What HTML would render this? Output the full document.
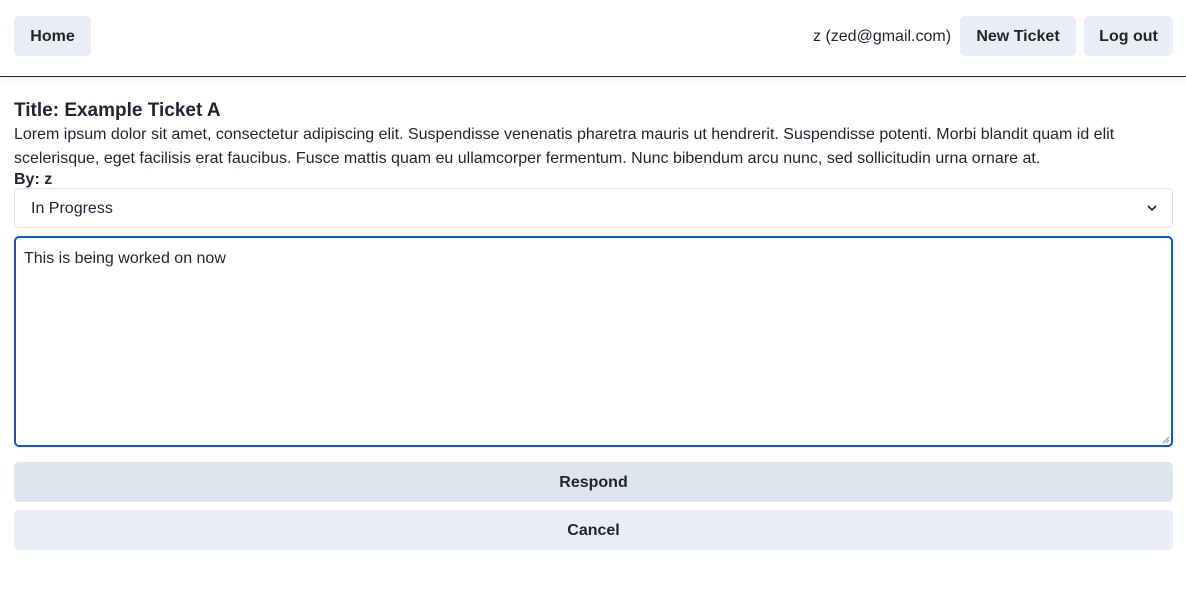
<!DOCTYPE html>
<html><head><meta charset="utf-8"><style>
*{box-sizing:border-box;margin:0;padding:0}
body{width:1186px;height:593px;background:#fff;font-family:"Liberation Sans",Arial,sans-serif;color:#1f2430;position:relative;overflow:hidden}
.hdr{position:absolute;left:0;top:0;width:1186px;height:77px;border-bottom:1px solid #1f2430;box-shadow:0 2px 6px rgba(0,0,0,0.08)}
.btn{position:absolute;top:16px;height:40px;background:#e9eef6;border-radius:5px;font-weight:bold;font-size:16px;display:flex;align-items:center;justify-content:center;padding-top:2px}
.user{position:absolute;top:28px;left:813px;font-size:16px}
.title{position:absolute;left:14px;top:100px;font-size:19px;font-weight:bold}
.p{position:absolute;left:14px;top:123px;width:1160px;font-size:16px;line-height:24px}
.by{position:absolute;left:14px;top:171px;font-size:16px;font-weight:bold}
.sel{position:absolute;left:14px;top:188px;width:1159px;height:40px;border:1px solid #dde3ec;border-radius:5px;font-size:16px;padding:11px 16px}
.ta{position:absolute;left:14px;top:236px;width:1159px;height:211px;border:2px solid #0b57c4;border-radius:5px;font-size:16px;padding:12px 8px}
.wide{position:absolute;left:14px;width:1159px;height:40px;border-radius:5px;font-weight:bold;font-size:16px;display:flex;align-items:center;justify-content:center;padding-top:2px}
</style></head><body>
<div class="hdr"></div>
<div class="btn" style="left:14px;width:77px">Home</div>
<div class="user">z (zed@gmail.com)</div>
<div class="btn" style="left:960px;width:116px">New Ticket</div>
<div class="btn" style="left:1084px;width:89px">Log out</div>
<div class="title">Title: Example Ticket A</div>
<div class="p">Lorem ipsum dolor sit amet, consectetur adipiscing elit. Suspendisse venenatis pharetra mauris ut hendrerit. Suspendisse potenti. Morbi blandit quam id elit scelerisque, eget facilisis erat faucibus. Fusce mattis quam eu ullamcorper fermentum. Nunc bibendum arcu nunc, sed sollicitudin urna ornare at.</div>
<div class="by">By: z</div>
<div class="sel">In Progress
<svg style="position:absolute;right:14px;top:15px" width="12" height="8" viewBox="0 0 12 8"><path d="M2 2l4 4 4-4" stroke="#1f2430" stroke-width="1.6" fill="none"/></svg></div>
<div class="ta">This is being worked on now
<svg style="position:absolute;right:1px;bottom:1px" width="8" height="8" viewBox="0 0 8 8"><path d="M7 1L1 7M7 4L4 7" stroke="#888" stroke-width="1"/></svg></div>
<div class="wide" style="top:462px;background:#dfe5ee">Respond</div>
<div class="wide" style="top:510px;background:#e9eef6">Cancel</div>
</body></html>
